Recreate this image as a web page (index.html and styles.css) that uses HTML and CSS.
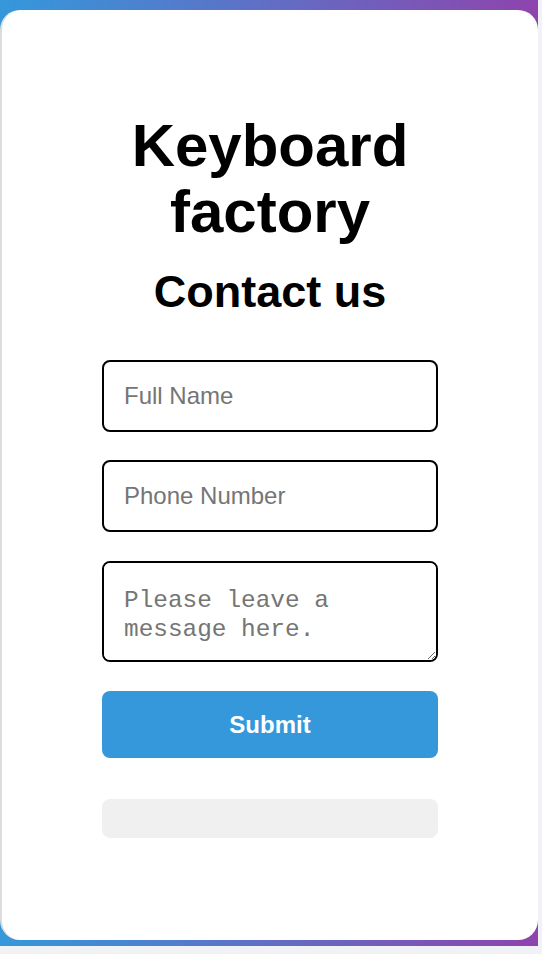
FILE: index.html
```html
<!DOCTYPE html>
<html lang="en">
<head>
<meta charset="utf-8">
<title>Keyboard factory - Contact us</title>
<link rel="stylesheet" href="styles.css">
</head>
<body>
<div class="page">
  <main class="card">
    <h1 class="title">Keyboard factory</h1>
    <h2 class="subtitle">Contact us</h2>
    <form class="form">
      <input class="field" type="text" placeholder="Full Name">
      <input class="field" type="tel" placeholder="Phone Number">
      <textarea class="field message" placeholder="Please leave a message here."></textarea>
      <button class="submit" type="button">Submit</button>
      <div class="status"></div>
    </form>
  </main>
</div>
</body>
</html>
```

FILE: styles.css
```css
html {
  background: #f0f2f5;
}
body {
  margin: 0;
  font-family: "Liberation Sans", Arial, sans-serif;
}
.page {
  width: 538px;
  height: 946px;
  box-sizing: border-box;
  padding-top: 10px;
  background: linear-gradient(90deg, #3498db, #8e44ad);
}
.card {
  height: 930px;
  box-sizing: border-box;
  background: #fff;
  border-left: 2px solid #dcdcdc;
  border-radius: 20px;
  display: flex;
  flex-direction: column;
  align-items: center;
  padding-top: 103px;
}
.title {
  margin: 0;
  width: 336px;
  text-align: center;
  font-size: 60px;
  line-height: 66px;
  font-weight: bold;
  color: #000;
}
.subtitle {
  margin: 21px 0 0;
  font-size: 45px;
  line-height: 52px;
  font-weight: bold;
  color: #000;
}
.form {
  margin-top: 42px;
  width: 336px;
  display: flex;
  flex-direction: column;
}
.field {
  box-sizing: border-box;
  width: 100%;
  height: 72px;
  margin: 0 0 28px;
  padding: 20px;
  border: 2px solid #000;
  border-radius: 8px;
  font-family: "Liberation Sans", Arial, sans-serif;
  font-size: 24px;
  color: #000;
  background: #fff;
  outline: none;
}
.field::placeholder {
  color: #757575;
}
.message {
  height: 101px;
  margin-top: 1px;
  margin-bottom: 29px;
  padding: 23px 20px 20px;
  font-family: "Liberation Mono", "Courier New", monospace;
  font-size: 24.4px;
  line-height: 29px;
  resize: vertical;
}
.submit {
  height: 67px;
  margin: 0;
  border: none;
  border-radius: 8px;
  background: #3498db;
  color: #fff;
  font-family: "Liberation Sans", Arial, sans-serif;
  font-size: 24px;
  font-weight: bold;
}
.status {
  margin-top: 41px;
  height: 39px;
  border-radius: 8px;
  background: #f0f0f0;
}
```
